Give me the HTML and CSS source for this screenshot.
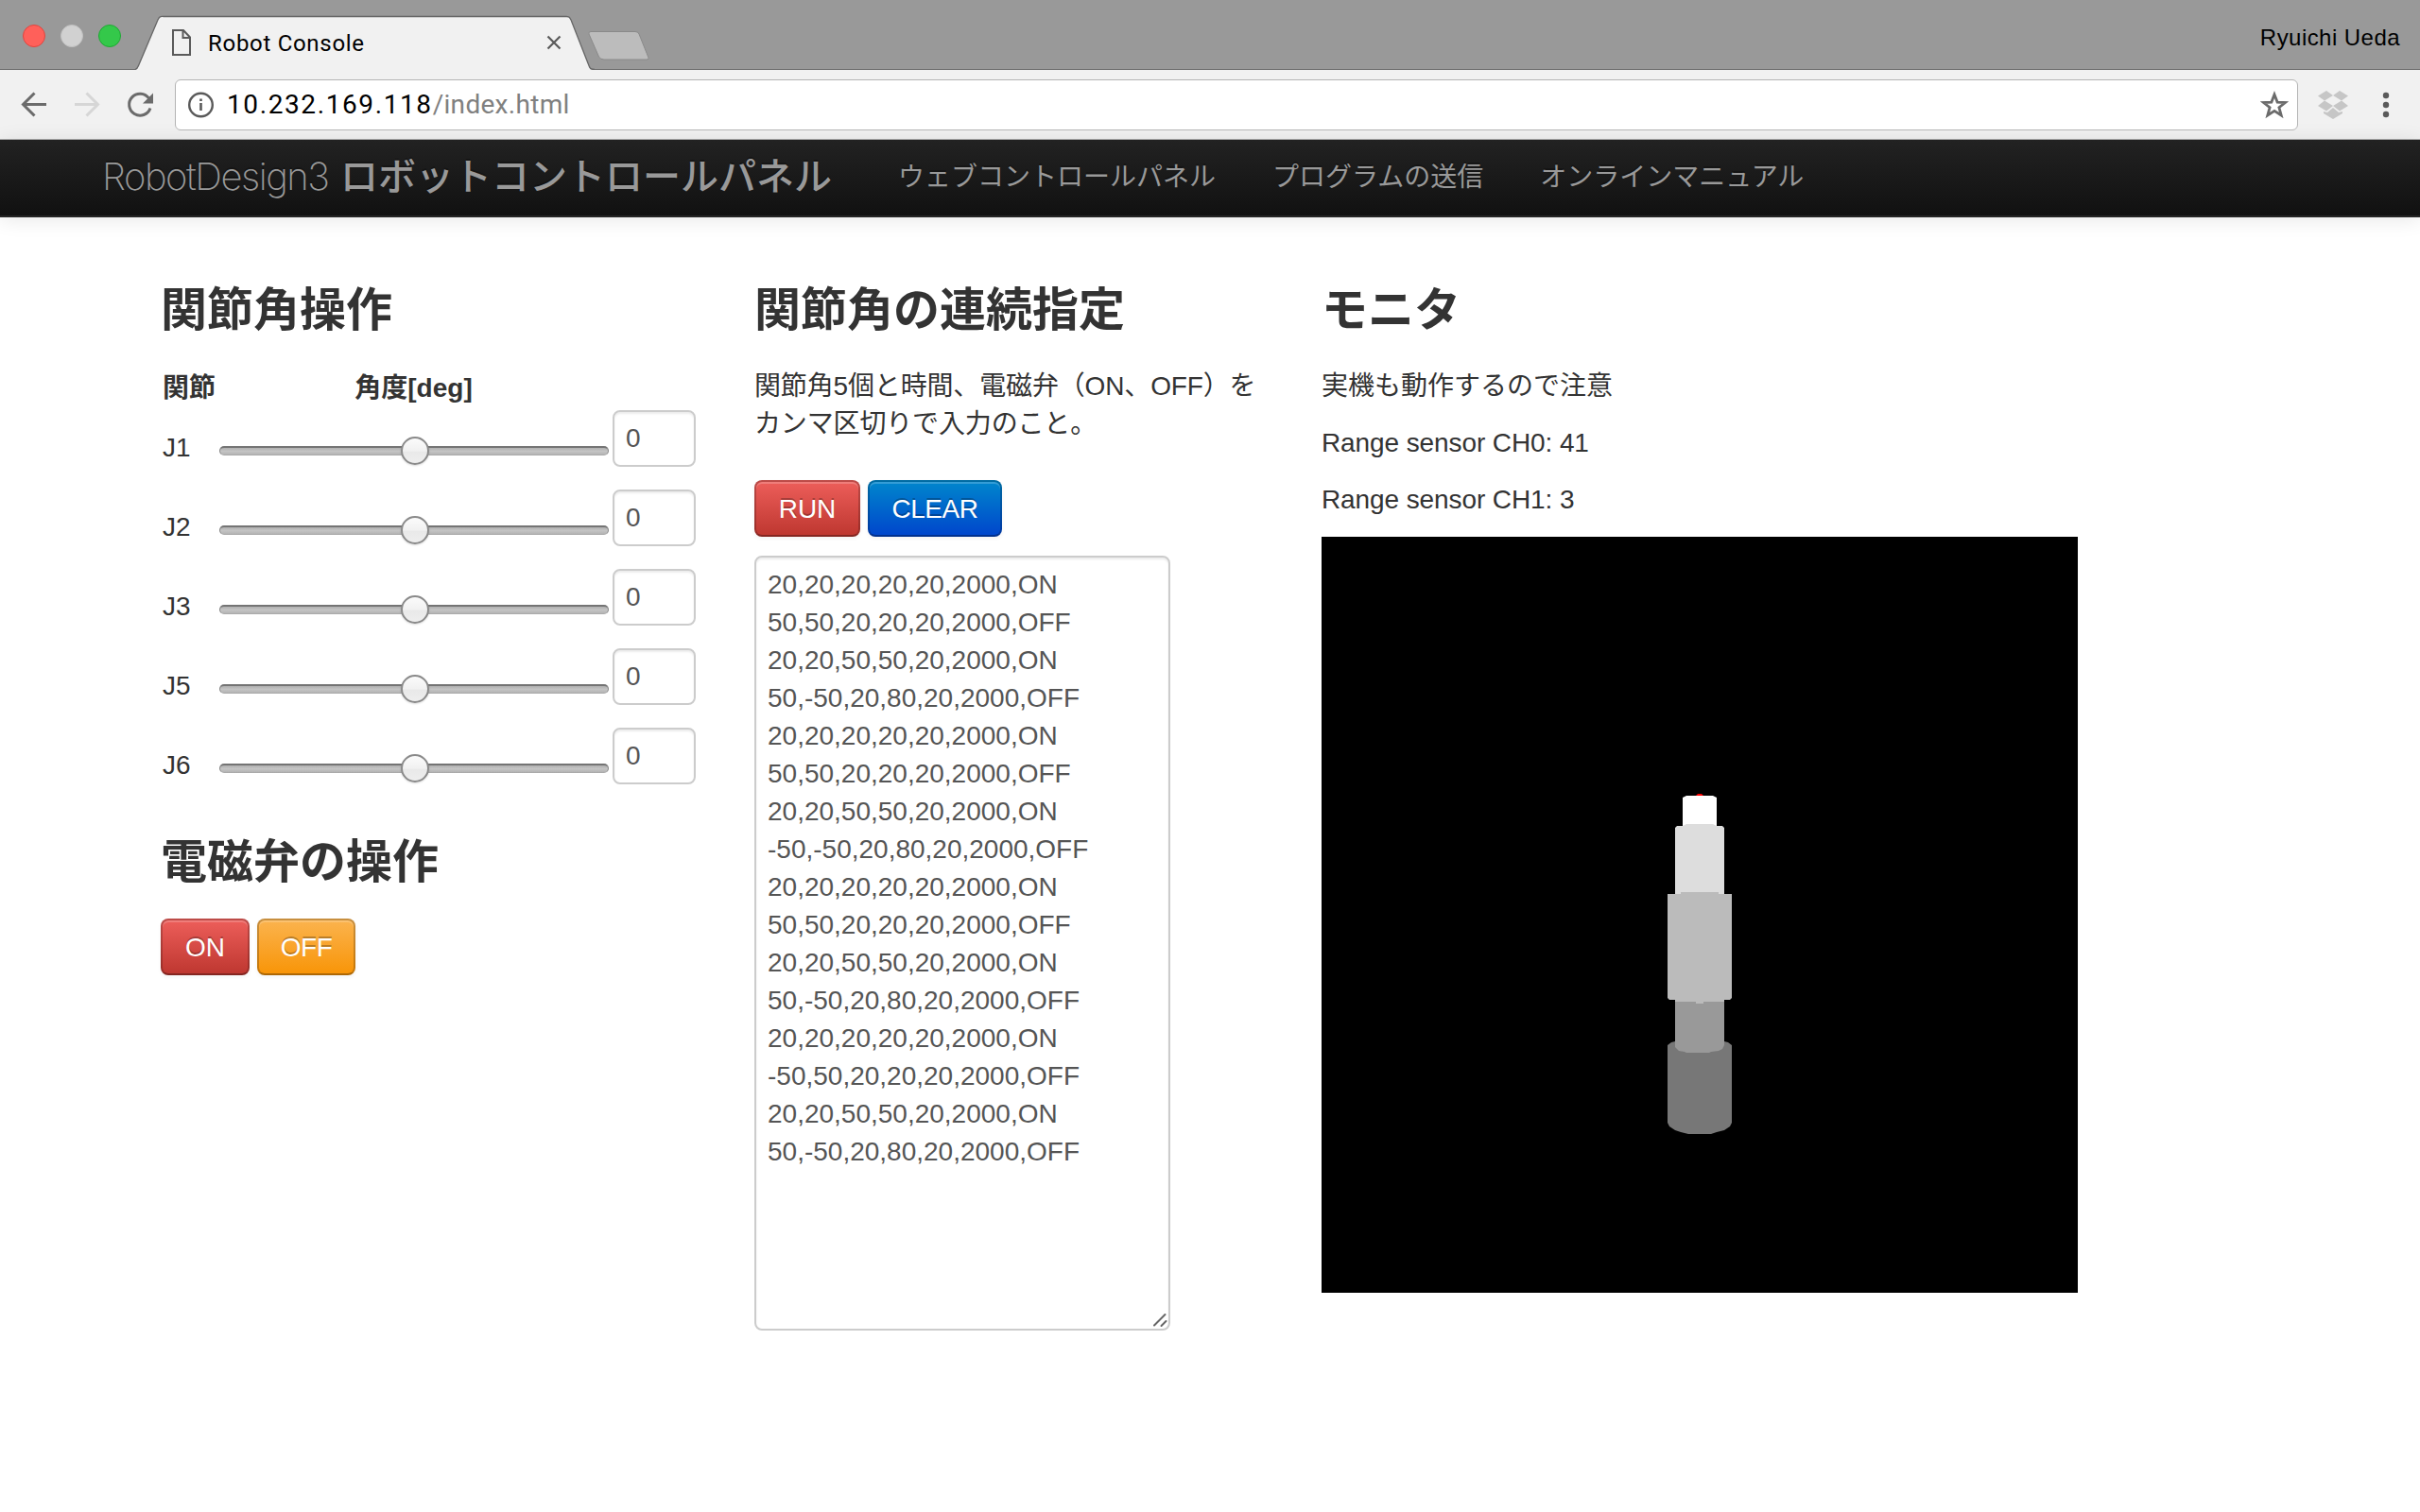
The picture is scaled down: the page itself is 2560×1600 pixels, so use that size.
FILE: index.html
```html
<!DOCTYPE html>
<html lang="ja">
<head>
<meta charset="utf-8">
<title>Robot Console</title>
<link rel="stylesheet" href="styles.css">
</head>
<body>
<header class="browser">
  <div class="tabstrip">
    <div class="lights"><span class="light red"></span><span class="light gray"></span><span class="light green"></span></div>
    <div class="tab">
      <svg class="tab-shape" width="486" height="58" viewBox="0 0 486 58"><path d="M0 57.500C2 57 2.500 56 3.500 53.500L24 5C26 .7 27 1.500 30 1.500H455C458 1.500 459 1 461 5L480 53.500C481 56.500 482 57.500 486 57.500V58H0Z" fill="#f1f1f1"/><path d="M0 57.500C2 57 2.500 56 3.500 53.500L24 5C26 .7 27 1.500 30 1.500H455C458 1.500 459 1 461 5L480 53.500C481 56.500 482 57.500 486 57.500" fill="none" stroke="#666" stroke-width="1.300"/><path d="M3 57.500H481" stroke="#f1f1f1" stroke-width="1.500"/></svg>
      <svg class="page-icon" width="20" height="28" viewBox="0 0 20 28"><path d="M1 1H12L19 8.500V27H1ZM11.500 1V9H19" fill="none" stroke="#5a5a5a" stroke-width="2"/></svg>
      <span class="tab-title">Robot Console</span>
      <svg class="close" width="16" height="16" viewBox="0 0 16 16"><path d="M1.500 1.500L14.500 14.500M14.500 1.500L1.500 14.500" stroke="#5a5a5a" stroke-width="2.200"/></svg>
    </div>
    <svg class="newtab" width="68" height="34" viewBox="0 0 68 34"><path d="M4 1.500H51Q54 1.500 55 4L65 29Q66 31 63 31H18Q14 31 12.500 28L2 4Q1 1.500 4 1.500Z" fill="#bcbcbc" stroke="#8a8a8a" stroke-width="1"/></svg>
    <span class="profile">Ryuichi Ueda</span>
  </div>
  <div class="toolbar">
    <svg class="nav-icons" width="162" height="36" viewBox="0 0 162 36"><g fill="none" stroke-width="3"><path d="M49 17.500H25M36.500 5.500L24.500 17.500L36.500 29.500" stroke="#6b6b6b"/><path d="M79 17.500H103M91.500 5.500L103.500 17.500L91.500 29.500" stroke="#d6d6d6"/><path d="M157.500 11A11.500 11.500 0 1 0 159 21.500" stroke="#6b6b6b"/></g><path d="M162 5.500V16.500H151Z" fill="#6b6b6b"/></svg>
    <div class="omnibox">
      <svg width="28" height="28" viewBox="0 0 28 28"><circle cx="14.500" cy="14" r="12.300" fill="none" stroke="#5a5a5a" stroke-width="2.400"/><path d="M13.200 12H15.800V20H13.200ZM13.200 7.500H15.800V10H13.200Z" fill="#5a5a5a"/></svg>
      <span class="url"><span class="host">10.232.169.118</span><span class="path">/index.html</span></span>
      <svg class="star" width="30" height="30" viewBox="0 0 30 30"><path d="M15 4L18.100 12.100L26.500 12.500L19.900 17.700L22.200 26L15 21.300L7.800 26L10.100 17.700L3.500 12.500L11.900 12.100Z" fill="none" stroke="#6b6b6b" stroke-width="2.800"/></svg>
    </div>
    <svg class="dropbox" width="32" height="30" viewBox="0 0 32 30"><path d="M9 0L16 5L7 10.500L0 5.500ZM23 0L32 5.500L25 10.500L16 5ZM0 16L7 10.500L16 16L9 21.500ZM25 10.500L32 16L23 21.500L16 16ZM16 18L22 23L26 22V24L16 30L6 24V22L10 23Z" fill="#c6c6c6"/></svg>
    <svg class="dots" width="8" height="28" viewBox="0 0 8 28"><g fill="#5a5a5a"><circle cx="4" cy="4" r="3.200"/><circle cx="4" cy="14" r="3.200"/><circle cx="4" cy="24" r="3.200"/></g></svg>
  </div>
</header>
<nav class="navbar">
  <a class="brand"><span class="brand-latin">RobotDesign3</span><span class="brand-ja">ロボットコントロールパネル</span></a>
  <a class="link">ウェブコントロールパネル</a>
  <a class="link">プログラムの送信</a>
  <a class="link">オンラインマニュアル</a>
</nav>
<main class="columns">
  <section class="joints">
    <h3>関節角操作</h3>
    <div class="row head"><b>関節</b><b class="deg">角度[deg]</b></div>
    <div class="row"><label>J1</label><div class="slider"><i class="thumb"></i></div><input type="text" value="0"></div>
    <div class="row"><label>J2</label><div class="slider"><i class="thumb"></i></div><input type="text" value="0"></div>
    <div class="row"><label>J3</label><div class="slider"><i class="thumb"></i></div><input type="text" value="0"></div>
    <div class="row"><label>J5</label><div class="slider"><i class="thumb"></i></div><input type="text" value="0"></div>
    <div class="row"><label>J6</label><div class="slider"><i class="thumb"></i></div><input type="text" value="0"></div>
    <h3 class="valve">電磁弁の操作</h3>
    <div class="buttons"><button class="btn danger on">ON</button><button class="btn warning off">OFF</button></div>
  </section>
  <section class="sequence">
    <h3>関節角の連続指定</h3>
    <p class="hint">関節角5個と時間、電磁弁（ON、OFF）を<br>カンマ区切りで入力のこと。</p>
    <div class="buttons"><button class="btn danger run">RUN</button><button class="btn primary clear">CLEAR</button></div>
    <div class="editor">
      <textarea spellcheck="false">20,20,20,20,20,2000,ON
50,50,20,20,20,2000,OFF
20,20,50,50,20,2000,ON
50,-50,20,80,20,2000,OFF
20,20,20,20,20,2000,ON
50,50,20,20,20,2000,OFF
20,20,50,50,20,2000,ON
-50,-50,20,80,20,2000,OFF
20,20,20,20,20,2000,ON
50,50,20,20,20,2000,OFF
20,20,50,50,20,2000,ON
50,-50,20,80,20,2000,OFF
20,20,20,20,20,2000,ON
-50,50,20,20,20,2000,OFF
20,20,50,50,20,2000,ON
50,-50,20,80,20,2000,OFF</textarea>
      <svg class="grip" width="16" height="16" viewBox="0 0 16 16"><path d="M2 13.500L13.500 2M9.500 14L14.500 9" stroke="#666" stroke-width="2" stroke-linecap="round"/></svg>
    </div>
  </section>
  <section class="monitor">
    <h3>モニタ</h3>
    <p>実機も動作するので注意</p>
    <p class="sensor">Range sensor CH0: 41</p>
    <p class="sensor">Range sensor CH1: 3</p>
    <svg class="scene" width="800" height="800" viewBox="0 0 800 800">
      <rect width="800" height="800" fill="#000"/>
      <path d="M366 620V538L370 535L374 534H426L430 535L434 538V620L432 624L426 628L418 630L412 632H388L380 630L374 628L368 624Z" fill="#777"/>
      <path d="M374 488H426V538L424 542L420 544L412 545L410 546H386L384 545L378 544L374 540Z" fill="#999"/>
      <path d="M366 378H374L380 376H420L426 378H434V488L432 490H426V492H404V494H396V492H374V490H368L366 488Z" fill="#bbb"/>
      <path d="M382 306V276L386 274H414L418 276V306Z" fill="#fff"/>
      <path d="M374 378V308L376 306H382L386 304H414L418 306H424L426 308V378H420V376H380V378Z" fill="#ddd"/>
      <path d="M396 274L398 272H402L404 274Z" fill="#f00"/>
    </svg>
  </section>
</main>
</body>
</html>
```
FILE: styles.css
```css
* { box-sizing: border-box; }
body {
  margin: 0;
  width: 2560px;
  height: 1600px;
  overflow: hidden;
  background: #fff;
  color: #333;
  font: 28px/40px "Liberation Sans", "Noto Sans CJK JP", sans-serif;
}
svg { display: block; flex: none; }
.tabstrip {
  display: flex;
  height: 74px;
  background: #999;
  border-bottom: 1px solid #6b6b6b;
}
.lights { display: flex; gap: 16px; width: 143px; padding: 26px 0 0 24px; }
.light { width: 24px; height: 24px; border-radius: 50%; border: 1px solid; }
.red { background: #ff605a; border-color: #e0443e; }
.gray { background: #d1d1d1; border-color: #c0c0c0; }
.green { background: #34c84a; border-color: #1fa834; }
.tab {
  position: relative;
  display: flex;
  align-items: center;
  width: 486px;
  height: 58px;
  margin-top: 16px;
  padding: 0 35px 0 39px;
}
.tab-shape { position: absolute; left: 0; top: 0; }
.page-icon, .tab-title, .close { position: relative; }
.tab-title {
  flex: 1;
  margin-left: 18px;
  padding-top: 1px;
  color: #000;
  font: 24px/40px Roboto, sans-serif;
  letter-spacing: .7px;
}
.newtab { margin: 32px 0 0 -8px; }
.profile {
  margin: 20px 21px 0 auto;
  color: #000;
  font-size: 24px;
  letter-spacing: .45px;
}
.toolbar {
  display: flex;
  align-items: center;
  height: 74px;
  background: #f1f1f1;
  border-bottom: 1px solid #aaa;
}
.omnibox {
  display: flex;
  align-items: center;
  width: 2246px;
  height: 54px;
  margin-left: 23px;
  padding: 0 9px 0 12px;
  border: 1px solid #b4b4b4;
  border-radius: 6px;
  background: #fff;
}
.url { flex: 1; margin-left: 14px; font: 28px/40px Roboto, sans-serif; }
.host { color: #000; letter-spacing: 1.6px; }
.path { color: #808080; letter-spacing: .3px; }
.dropbox { margin-left: 21px; }
.dots { margin-left: 36px; }
.navbar {
  display: flex;
  gap: 60px;
  height: 82px;
  padding: 19px 0 0 108px;
  background: linear-gradient(#222, #111);
  border-bottom: 2px solid #252525;
  box-shadow: 0 2px 20px rgba(0, 0, 0, .1);
  color: #999;
  text-shadow: 0 -2px 0 rgba(0, 0, 0, .25);
  white-space: nowrap;
}
.link { padding-top: 1px; }
.brand { display: flex; width: 782px; font-size: 40px; }
.brand-latin { width: 252px; font-family: Inter, sans-serif; font-weight: 200; letter-spacing: -1.5px; }
.brand-ja { font-weight: 500; }
.columns { display: flex; padding: 58px 0 0 170px; }
.joints { width: 628px; }
.sequence { width: 600px; }
h3 { margin: 0 0 20px; font-size: 49px; line-height: 80px; font-weight: 700; }
p { margin: 0 0 20px; padding-top: 1px; height: 40px; white-space: nowrap; }
.hint { height: 80px; letter-spacing: -.15px; }
.sensor { letter-spacing: -.1px; }
.row { display: flex; height: 84px; padding-left: 2px; }
.row.head { height: 46px; padding-top: 3px; }
.deg { width: 411px; margin-left: 4px; text-align: center; }
.row label { width: 60px; padding-top: 20px; }
.slider {
  position: relative;
  width: 412px;
  height: 10px;
  margin-top: 38px;
  border: 1px solid #858585;
  border-top: 2px solid #747474;
  border-bottom-color: #aaa;
  border-radius: 5px;
  background: linear-gradient(#b0b0b0, #c4c4c4 50%, #b4b4b4);
}
.thumb {
  position: absolute;
  left: 191px;
  top: -12px;
  width: 30px;
  height: 30px;
  border: 2px solid #8a8a8a;
  border-radius: 50%;
  background: linear-gradient(#fbfbfb, #f1f1f1 50%, #e9e9e9 55%, #eee);
  box-shadow: 0 1px 2px rgba(0, 0, 0, .15);
}
input, textarea {
  border: 2px solid #ccc;
  border-radius: 8px;
  background: #fff;
  color: #555;
  font: inherit;
  box-shadow: inset 0 2px 2px rgba(0, 0, 0, .075);
}
input { width: 88px; height: 60px; margin-left: 4px; padding: 0 12px; }
.valve { margin-top: 18px; }
.buttons { display: flex; gap: 8px; }
.sequence .buttons { margin-top: 40px; }
.btn {
  height: 60px;
  padding: 1px 0 0;
  border: 2px solid rgba(0, 0, 0, .2);
  border-bottom-color: rgba(0, 0, 0, .3);
  border-radius: 8px;
  background-origin: border-box;
  color: #fff;
  font: inherit;
  text-shadow: 0 -2px 0 rgba(0, 0, 0, .25);
  box-shadow: inset 0 2px 0 rgba(255, 255, 255, .2), 0 2px 4px rgba(0, 0, 0, .05);
}
.danger { background-image: linear-gradient(#ee5f5b, #bd362f); }
.warning { background-image: linear-gradient(#fbb450, #f89406); }
.primary { background-image: linear-gradient(#08c, #04c); }
.on { width: 94px; }
.off { width: 104px; letter-spacing: -.5px; }
.run { width: 112px; }
.clear { width: 142px; letter-spacing: -.5px; }
.editor { position: relative; width: 440px; height: 820px; margin-top: 20px; }
textarea { display: block; width: 440px; height: 820px; padding: 9px 12px 0; resize: none; overflow: hidden; }
.grip { position: absolute; right: 3px; bottom: 3px; }
```
